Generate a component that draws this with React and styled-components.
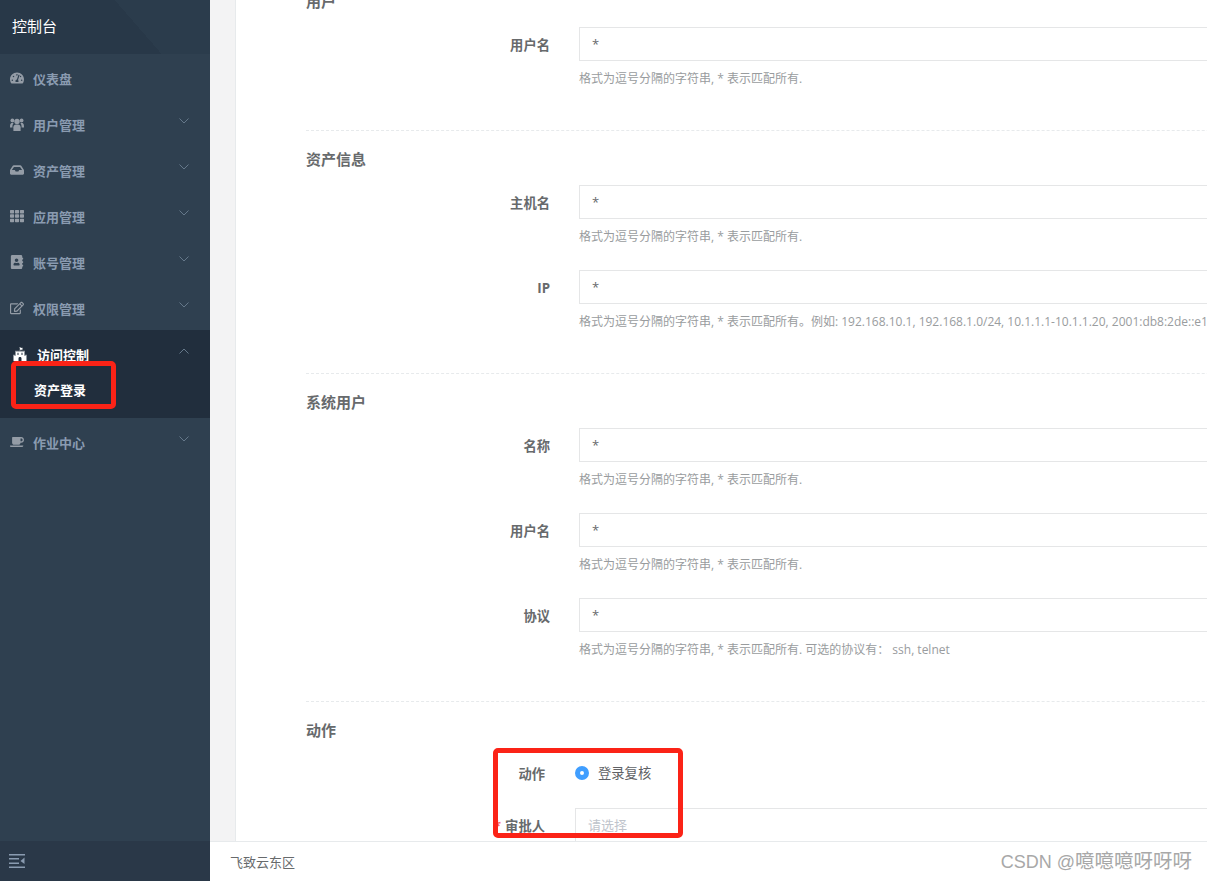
import React from "react";
import styled, { createGlobalStyle } from "styled-components";
import { FaTachometerAlt, FaInbox, FaTh, FaAddressBook, FaRegEdit, FaCoffee, FaFortAwesome } from "react-icons/fa";

const GlobalStyle = createGlobalStyle`
  html, body {
    margin: 0;
    padding: 0;
    height: 100%;
    overflow: hidden;
    background: #fff;
    font-family: "Open Sans", "Noto Sans CJK SC", sans-serif;
    color: #676a6c;
  }
  * { box-sizing: border-box; }
`;

const Page = styled.div`
  position: relative;
  display: flex;
  height: 100vh;
  overflow: hidden;
`;

const Sidebar = styled.aside`
  display: flex;
  flex-direction: column;
  flex: 0 0 210px;
  background: #2f4050;
`;

const Brand = styled.div`
  display: flex;
  align-items: center;
  height: 54px;
  padding: 0 12px 4px;
  font-size: 15px;
  color: #fff;
  background: linear-gradient(49deg, #283848 122px, #2b3c4c 122px);
`;

const Menu = styled.nav`
  flex: 1;
`;

const MenuRow = styled.div`
  display: flex;
  align-items: center;
  height: 46px;
  padding-left: ${(p) => (p.$active ? "13px" : "10px")};
  padding-top: 2px;
  font-size: 13px;
  font-weight: 700;
  color: ${(p) => (p.$active ? "#fff" : "#8a9bb0")};
`;

const IconSlot = styled.span`
  display: flex;
  align-items: center;
  width: ${(p) => (p.$active ? "24px" : "23px")};
  font-size: 14px;
  color: ${(p) => (p.$active ? "#fff" : "#949ca6")};
`;

const MenuLabel = styled.span`
  flex: 1;
`;

const Chevron = styled.svg`
  width: 10px;
  height: 6px;
  margin: 0 21px 7px 0;
  fill: none;
  stroke: #65788a;
  stroke-width: 1;
`;

const ActiveGroup = styled.div`
  height: 88px;
  background: #212e3d;
`;

const SubItem = styled.div`
  padding: 5px 0 0 34px;
  font-size: 13px;
  font-weight: 700;
  line-height: 18px;
  color: #fff;
`;

const Collapse = styled.div`
  display: flex;
  align-items: center;
  height: 40px;
  padding-left: 9px;
  background: #2a3848;
`;

const Main = styled.main`
  display: flex;
  flex: 1;
  flex-direction: column;
  min-width: 0;
`;

const Content = styled.div`
  flex: 1;
  min-height: 0;
  overflow: hidden;
  padding-left: 25px;
  background: #f3f3f4;
`;

const Panel = styled.div`
  width: 1300px;
  margin-top: -27px;
  padding-left: 70px;
  background: #fff;
  border-left: 1px solid #e7eaec;
`;

const Section = styled.section`
  padding: 18px 0;
  border-bottom: ${(p) => (p.$last ? "none" : "1px dashed #e7eaec")};
`;

const SectionTitle = styled.h3`
  margin: 0 0 16px;
  font-size: 15px;
  font-weight: 700;
  line-height: 20px;
  color: #676a6c;
`;

const Row = styled.div`
  display: flex;
  align-items: flex-start;
  margin-bottom: ${(p) => (p.$compact ? "16px" : "25px")};
`;

const Label = styled.label`
  flex: 0 0 ${(p) => (p.$narrow ? "239px" : "244px")};
  margin-right: ${(p) => (p.$narrow ? "30px" : "29px")};
  font-size: 13.3px;
  font-weight: 700;
  line-height: 36px;
  text-align: right;
  color: #676a6c;
`;

const Required = styled.span`
  margin-right: 4px;
  color: #f56c6c;
`;

const Field = styled.div`
  flex: 1;
  min-width: 0;
`;

const TextBox = styled.div`
  height: 34px;
  padding: 0 12px;
  font-size: 13px;
  line-height: 33px;
  color: ${(p) => (p.$placeholder ? "#c0c4cc" : "#676a6c")};
  background: #fff;
  border: 1px solid #e5e6e7;
`;

const Help = styled.div`
  margin-top: 9px;
  font-size: 12px;
  line-height: 17px;
  white-space: nowrap;
  color: #999c9e;
`;

const RadioRow = styled.div`
  display: flex;
  align-items: center;
  height: 34px;
  font-size: 13.3px;
  color: #606266;
`;

const RadioDot = styled.span`
  width: 14px;
  height: 14px;
  margin-right: 9px;
  border-radius: 50%;
  border: 5px solid #409eff;
  background: #fff;
`;

const RadioText = styled.span`
  margin-bottom: 2px;
`;

const Footer = styled.footer`
  display: flex;
  align-items: center;
  flex: 0 0 40px;
  padding-left: 20px;
  font-size: 13px;
  color: #676a6c;
  background: #fff;
  border-top: 1px solid #e7eaec;
`;

const Callout = styled.div`
  position: absolute;
  left: ${(p) => p.$x}px;
  top: ${(p) => p.$y}px;
  width: ${(p) => p.$w}px;
  height: ${(p) => p.$h}px;
  border: 5px solid #fb2317;
  border-radius: 5px;
  pointer-events: none;
`;

const Watermark = styled.div`
  position: absolute;
  right: 15px;
  bottom: 8px;
  font-family: "Liberation Sans", "Noto Sans CJK SC", sans-serif;
  font-size: 18px;
  line-height: 22px;
  color: #a8a8a8;
`;

const WatermarkName = styled.span`
  font-size: 19.5px;
`;

// the old font-awesome "users" glyph, the package one is wider and flatter
function UsersIcon() {
  return (
    <svg width="14" height="13" viewBox="0 0 14 13" fill="currentColor">
      <circle cx="7" cy="3.4" r="2.7" />
      <circle cx="2.4" cy="2.4" r="1.9" />
      <circle cx="11.6" cy="2.4" r="1.9" />
      <path d="M3.4 13V9.2C3.4 7.4 4.7 6.4 6 6.4h2c1.3 0 2.6 1 2.6 2.8V13z" />
      <path d="M0 8.4C0 6 .9 4.8 2.4 4.8c.5 0 .9.1 1.2.3-.6.9-1.2 2-1.2 3.6v.9H0z" />
      <path d="M14 8.4C14 6 13.1 4.8 11.6 4.8c-.5 0-.9.1-1.2.3.6.9 1.2 2 1.2 3.6v.9H14z" />
    </svg>
  );
}

const menuTop = [
  { icon: FaTachometerAlt, label: "仪表盘", plain: true },
  { icon: UsersIcon, label: "用户管理" },
  { icon: FaInbox, label: "资产管理" },
  { icon: FaTh, label: "应用管理" },
  { icon: FaAddressBook, label: "账号管理" },
  { icon: FaRegEdit, label: "权限管理" },
];

const baseHelp = "格式为逗号分隔的字符串, * 表示匹配所有.";

const sections = [
  {
    title: "用户",
    rows: [{ label: "用户名", help: baseHelp }],
  },
  {
    title: "资产信息",
    rows: [
      { label: "主机名", help: baseHelp },
      {
        label: "IP",
        help: "格式为逗号分隔的字符串, * 表示匹配所有。例如: 192.168.10.1, 192.168.1.0/24, 10.1.1.1-10.1.1.20, 2001:db8:2de::e13, 2001:db8:1a:1110::/64",
      },
    ],
  },
  {
    title: "系统用户",
    rows: [
      { label: "名称", help: baseHelp },
      { label: "用户名", help: baseHelp },
      { label: "协议", help: "格式为逗号分隔的字符串, * 表示匹配所有. 可选的协议有： ssh, telnet" },
    ],
  },
];

function ChevronIcon({ up }) {
  return (
    <Chevron viewBox="0 0 10 6">
      <polyline points={up ? "0.5,5.5 5,1 9.5,5.5" : "0.5,0.5 5,5 9.5,0.5"} />
    </Chevron>
  );
}

function MenuItem({ icon: Icon, label, plain, active }) {
  return (
    <MenuRow $active={active}>
      <IconSlot $active={active}><Icon /></IconSlot>
      <MenuLabel>{label}</MenuLabel>
      {!plain && <ChevronIcon up={active} />}
    </MenuRow>
  );
}

export default function App() {
  return (
    <Page>
      <GlobalStyle />
      <Sidebar>
        <Brand>控制台</Brand>
        <Menu>
          {menuTop.map((m) => (
            <MenuItem key={m.label} {...m} />
          ))}
          <ActiveGroup>
            <MenuItem icon={FaFortAwesome} label="访问控制" active />
            <SubItem>资产登录</SubItem>
          </ActiveGroup>
          <MenuItem icon={FaCoffee} label="作业中心" />
        </Menu>
        <Collapse>
          <svg width="16" height="14" viewBox="0 0 16 14" fill="#8a9bb0">
            <rect x="0" y="0" width="16" height="1.5" />
            <rect x="0" y="4" width="10" height="1.5" />
            <rect x="0" y="8.5" width="10" height="1.5" />
            <rect x="0" y="12.5" width="16" height="1.5" />
            <polygon points="15.5,3.5 15.5,10 11.5,7" />
          </svg>
        </Collapse>
      </Sidebar>
      <Main>
        <Content>
          <Panel>
            {sections.map((s) => (
              <Section key={s.title}>
                <SectionTitle>{s.title}</SectionTitle>
                {s.rows.map((r) => (
                  <Row key={r.label}>
                    <Label>{r.label}</Label>
                    <Field>
                      <TextBox>*</TextBox>
                      <Help>{r.help}</Help>
                    </Field>
                  </Row>
                ))}
              </Section>
            ))}
            <Section $last>
              <SectionTitle>动作</SectionTitle>
              <Row $compact>
                <Label $narrow>动作</Label>
                <Field>
                  <RadioRow>
                    <RadioDot />
                    <RadioText>登录复核</RadioText>
                  </RadioRow>
                </Field>
              </Row>
              <Row>
                <Label $narrow><Required>*</Required>审批人</Label>
                <Field>
                  <TextBox $placeholder>请选择</TextBox>
                </Field>
              </Row>
            </Section>
          </Panel>
        </Content>
        <Footer>飞致云东区</Footer>
      </Main>
      <Callout $x={11} $y={361} $w={105} $h={48} />
      <Callout $x={493} $y={748} $w={190} $h={90} />
      <Watermark>CSDN @<WatermarkName>噫噫噫呀呀呀</WatermarkName></Watermark>
    </Page>
  );
}
